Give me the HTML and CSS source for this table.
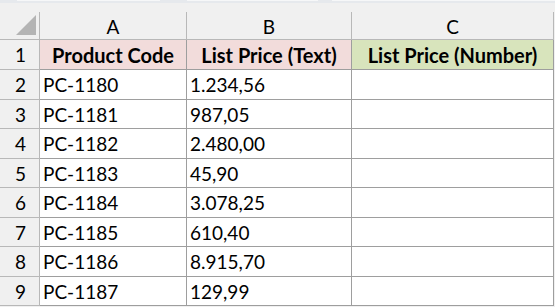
FILE: index.html
```html
<!DOCTYPE html>
<html>
<head>
<meta charset="utf-8">
<link rel="stylesheet" href="styles.css">
</head>
<body>
<div class="sheet">
  <div class="topbar">
    <div class="tb tb1"></div>
    <div class="tb tb2"></div>
    <div class="tb tb3"></div>
  </div>
  <div class="grid">
    <div class="hdr corner"><span class="tri"></span></div>
    <div class="hdr col">A</div>
    <div class="hdr col">B</div>
    <div class="hdr col">C</div>

    <div class="hdr rown r30">1</div>
    <div class="cell head pink r30">Product Code</div>
    <div class="cell head pink r30">List Price (Text)</div>
    <div class="cell head green r30">List Price (Number)</div>

    <div class="hdr rown r30">2</div>
    <div class="cell r30">PC-1180</div>
    <div class="cell r30">1.234,56</div>
    <div class="cell r30"></div>

    <div class="hdr rown r29">3</div>
    <div class="cell r29">PC-1181</div>
    <div class="cell r29">987,05</div>
    <div class="cell r29"></div>

    <div class="hdr rown r30">4</div>
    <div class="cell r30">PC-1182</div>
    <div class="cell r30">2.480,00</div>
    <div class="cell r30"></div>

    <div class="hdr rown r29">5</div>
    <div class="cell r29">PC-1183</div>
    <div class="cell r29">45,90</div>
    <div class="cell r29"></div>

    <div class="hdr rown r30">6</div>
    <div class="cell r30">PC-1184</div>
    <div class="cell r30">3.078,25</div>
    <div class="cell r30"></div>

    <div class="hdr rown r29">7</div>
    <div class="cell r29">PC-1185</div>
    <div class="cell r29">610,40</div>
    <div class="cell r29"></div>

    <div class="hdr rown r30">8</div>
    <div class="cell r30">PC-1186</div>
    <div class="cell r30">8.915,70</div>
    <div class="cell r30"></div>

    <div class="hdr rown r29">9</div>
    <div class="cell r29">PC-1187</div>
    <div class="cell r29">129,99</div>
    <div class="cell r29"></div>
  </div>
</div>
</body>
</html>
```
FILE: styles.css
```css
html, body {
  margin: 0;
  padding: 0;
  background: #ffffff;
}
.sheet {
  width: 555px;
  height: 307px;
  overflow: hidden;
  font-family: Lato, "Open Sans", sans-serif;
  font-size: 19px;
  color: #000;
  background: #f0f0f0;
}
.topbar {
  height: 12px;
  position: relative;
  background: #f0f0f0;
}
.topbar::before {
  content: "";
  position: absolute;
  left: 0; top: 0; right: 0;
  height: 3px;
  background: #e6e9ed;
}
.tb {
  position: absolute;
  top: 0;
  height: 1px;
  background: #f6f7f8;
}
.tb1 { left: 17px; width: 143px; }
.tb2 { left: 187px; width: 131px; }
.tb3 { left: 332px; width: 223px; }
.grid {
  display: grid;
  grid-template-columns: 40px 147px 165px 202px;
  width: 554px;
  background: #fff;
}
.hdr {
  background: #f0f0f0;
  box-sizing: border-box;
  border-right: 1px solid #b8b8b8;
  border-bottom: 1px solid #b8b8b8;
  display: flex;
  align-items: center;
  justify-content: center;
  line-height: 1;
}
.col {
  height: 28px;
  padding-top: 1px;
}
.corner {
  height: 28px;
  position: relative;
}
.tri {
  position: absolute;
  left: 16px;
  top: 3px;
  width: 20px;
  height: 20px;
  background: #b4b4b4;
  clip-path: polygon(100% 0, 100% 100%, 0 100%);
}
.rown {
  padding-left: 2px;
}
.cell {
  box-sizing: border-box;
  border-right: 1px solid #9e9e9e;
  border-bottom: 1px solid #9e9e9e;
  display: flex;
  align-items: center;
  padding-left: 3px;
  line-height: 1;
  white-space: nowrap;
}
.r30 { height: 30px; }
.r29 { height: 29px; }
.head {
  font-weight: bold;
  font-size: 20px;
  justify-content: center;
  padding-left: 0;
}
.pink { background: #f2dcdb; }
.green { background: #d8e4bc; }
```
